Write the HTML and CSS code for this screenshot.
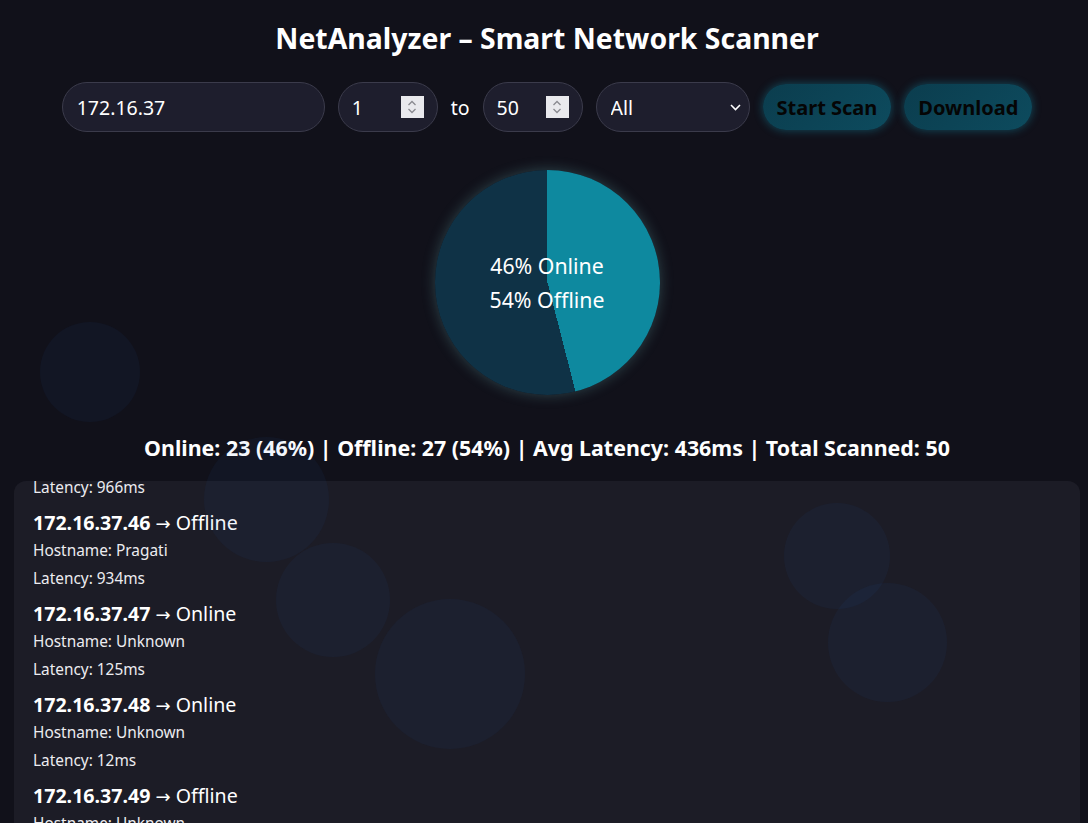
FILE: index.html
```html
<!DOCTYPE html>
<html lang="en">
<head>
<meta charset="utf-8">
<title>NetAnalyzer – Smart Network Scanner</title>
<link rel="stylesheet" href="styles.css">
</head>
<body>
<div class="bubbles" aria-hidden="true">
  <span class="bubble b1"></span>
  <span class="bubble b2"></span>
  <span class="bubble b3"></span>
  <span class="bubble b4"></span>
  <span class="bubble b5"></span>
  <span class="bubble b6"></span>
</div>
<main class="app">
  <h1 class="title">NetAnalyzer – Smart Network Scanner</h1>
  <div class="controls">
    <div class="field ip-field"><input class="field-input" type="text" value="172.16.37"></div>
    <div class="field num-field">
      <input class="field-input" type="text" value="1">
      <span class="spin"><svg width="12" height="18" viewBox="0 0 12 18"><path d="M2.5 7 L6 3.5 L9.5 7" fill="none" stroke="#8a8a90" stroke-width="1.3"/><path d="M2.5 11 L6 14.5 L9.5 11" fill="none" stroke="#8a8a90" stroke-width="1.3"/></svg></span>
    </div>
    <span class="to">to</span>
    <div class="field num-field">
      <input class="field-input" type="text" value="50">
      <span class="spin"><svg width="12" height="18" viewBox="0 0 12 18"><path d="M2.5 7 L6 3.5 L9.5 7" fill="none" stroke="#8a8a90" stroke-width="1.3"/><path d="M2.5 11 L6 14.5 L9.5 11" fill="none" stroke="#8a8a90" stroke-width="1.3"/></svg></span>
    </div>
    <div class="field sel-field">
      <select class="field-select"><option>All</option><option>Online</option><option>Offline</option></select>
      <svg class="chev" width="11" height="7" viewBox="0 0 11 7"><path d="M1 1 L5.5 5.5 L10 1" fill="none" stroke="#ffffff" stroke-width="1.6"/></svg>
    </div>
    <button class="btn">Start Scan</button>
    <button class="btn">Download</button>
  </div>
  <div class="pie">
    <div class="pie-label">46% Online</div>
    <div class="pie-label">54% Offline</div>
  </div>
  <div class="stats">Online: 23 (46%) | Offline: 27 (54%) | Avg Latency: 436ms | Total Scanned: 50</div>
  <section class="results">
    <div class="results-inner">
      <div class="item">
        <div class="ip"><b>172.16.37.45</b> <span class="arrow">→</span> Online</div>
        <div class="meta">Hostname: Unknown</div>
        <div class="meta">Latency: 966ms</div>
      </div>
      <div class="item">
        <div class="ip"><b>172.16.37.46</b> <span class="arrow">→</span> Offline</div>
        <div class="meta">Hostname: Pragati</div>
        <div class="meta">Latency: 934ms</div>
      </div>
      <div class="item">
        <div class="ip"><b>172.16.37.47</b> <span class="arrow">→</span> Online</div>
        <div class="meta">Hostname: Unknown</div>
        <div class="meta">Latency: 125ms</div>
      </div>
      <div class="item">
        <div class="ip"><b>172.16.37.48</b> <span class="arrow">→</span> Online</div>
        <div class="meta">Hostname: Unknown</div>
        <div class="meta">Latency: 12ms</div>
      </div>
      <div class="item">
        <div class="ip"><b>172.16.37.49</b> <span class="arrow">→</span> Offline</div>
        <div class="meta">Hostname: Unknown</div>
        <div class="meta">Latency: 702ms</div>
      </div>
      <div class="item">
        <div class="ip"><b>172.16.37.50</b> <span class="arrow">→</span> Offline</div>
        <div class="meta">Hostname: Unknown</div>
        <div class="meta">Latency: 311ms</div>
      </div>
    </div>
  </section>
</main>
</body>
</html>
```
FILE: styles.css
```css
* { box-sizing: border-box; }
html, body { margin: 0; padding: 0; }
body {
  background: #11111a;
  color: #ffffff;
  font-family: "Noto Sans", "Open Sans", sans-serif;
  overflow: hidden;
  height: 823px;
}
.app {
  padding: 20px 8px 0 14px;
  position: relative;
}
.title {
  margin: 0;
  text-align: center;
  font-size: 28.4px;
  line-height: 36px;
  font-weight: 700;
}
.controls {
  margin-top: 26px;
  display: flex;
  justify-content: center;
  align-items: center;
  gap: 13px;
}
.field {
  height: 50px;
  border: 1px solid #3b3b4b;
  border-radius: 25px;
  background: #1e1e2d;
  display: flex;
  align-items: center;
}
.field-input {
  background: transparent;
  border: 0;
  outline: none;
  color: #ffffff;
  font: inherit;
  font-size: 19.5px;
  min-width: 0;
  flex: 1;
  padding: 0;
}
.ip-field { width: 263px; padding: 0 14px; }
.num-field { width: 100px; padding: 0 13px 0 13px; }
.spin {
  width: 23px;
  height: 22px;
  background: #e9e9ed;
  display: flex;
  align-items: center;
  justify-content: center;
  flex: none;
}
.to { font-size: 19.5px; }
.sel-field { width: 154px; padding: 0 8px 0 14px; }
.field-select {
  appearance: none;
  -webkit-appearance: none;
  background: transparent;
  border: 0;
  outline: none;
  color: #ffffff;
  font: inherit;
  font-size: 19.5px;
  flex: 1;
  padding: 0;
}
.chev { flex: none; }
.btn {
  height: 46px;
  padding: 0 14px;
  border: 0;
  border-radius: 23px;
  background: linear-gradient(135deg, #0b3d4e, #0d4b5e);
  color: #050505;
  font: inherit;
  font-size: 20px;
  font-weight: 700;
  box-shadow: 0 0 10px rgba(20, 150, 180, 0.45);
}
.pie {
  margin: 38px auto 0;
  width: 225px;
  height: 225px;
  border-radius: 50%;
  background: conic-gradient(#0e899f 0 46%, #0f3246 46% 100%);
  box-shadow: 0 0 14px rgba(120, 200, 200, 0.28);
  display: flex;
  flex-direction: column;
  justify-content: center;
  align-items: center;
}
.pie-label {
  font-size: 21.3px;
  line-height: 34px;
}
.stats {
  margin-top: 39px;
  text-align: center;
  font-weight: 700;
  font-size: 21.4px;
  line-height: 28px;
  white-space: nowrap;
}
.results {
  margin-top: 19px;
  background: #1c1c26;
  border-radius: 12px;
  height: 400px;
  overflow: hidden;
  padding: 0 19px;
}
.results-inner { margin-top: -61px; }
.item { margin-bottom: 9px; }
.ip {
  font-size: 19.6px;
  line-height: 24px;
  height: 26px;
  white-space: nowrap;
}
.ip b { font-weight: 700; }
.arrow {
  font-family: "DejaVu Sans", sans-serif;
  font-size: 18px;
  line-height: 0;
}
.meta {
  font-size: 15.4px;
  line-height: 28px;
  color: #ececf0;
}
.bubbles {
  position: absolute;
  inset: 0;
  pointer-events: none;
  z-index: 5;
}
.bubble {
  position: absolute;
  border-radius: 50%;
  background: rgba(30, 110, 200, 0.06);
}
.b1 { left: 40px; top: 322px; width: 100px; height: 100px; }
.b2 { left: 204px; top: 437px; width: 125px; height: 125px; }
.b3 { left: 276px; top: 543px; width: 114px; height: 114px; }
.b4 { left: 375px; top: 599px; width: 150px; height: 150px; }
.b5 { left: 784px; top: 503px; width: 106px; height: 106px; }
.b6 { left: 828px; top: 583px; width: 119px; height: 119px; }
```
